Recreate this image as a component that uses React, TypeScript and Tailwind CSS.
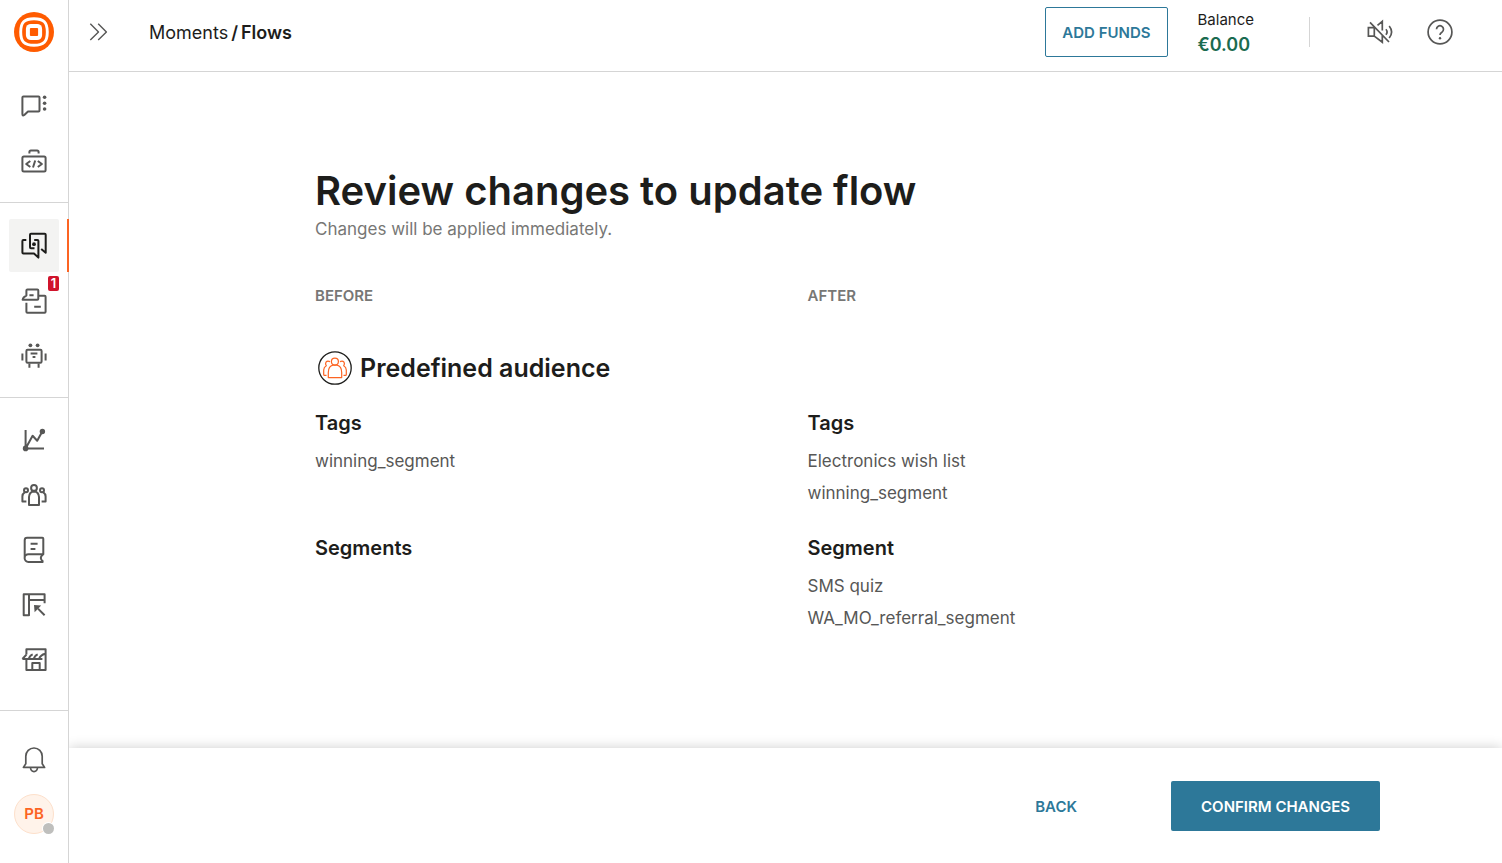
import type { ReactNode } from 'react';
import { clsx } from 'clsx';

interface NavItem {
  label: string;
  icon: ReactNode;
  active?: boolean;
  badge?: number;
}

interface ChangeGroup {
  title: string;
  items: string[];
}

const channelItems: NavItem[] = [
  {
    label: 'Channels and numbers',
    icon: (
      <>
        <path d="M3.5 5.5h15a1 1 0 0 1 1 1v13a1 1 0 0 1-1 1H8L4.3 24q-1.9 1.2-1.9-1V6.5a1 1 0 0 1 1-1z" />
        <g fill="currentColor" stroke="none">
          <circle cx="24.6" cy="6.2" r="1.8" />
          <circle cx="24.6" cy="12.2" r="1.8" />
          <circle cx="24.6" cy="18" r="1.8" />
        </g>
      </>
    ),
  },
  {
    label: 'Developer tools',
    icon: (
      <>
        <rect x="2.4" y="10.6" width="23.2" height="14.8" rx="1.5" />
        <path d="M9.4 7.6V6a1.5 1.5 0 0 1 1.5-1.5h6.2A1.5 1.5 0 0 1 18.6 6v1.6M10.3 15l-4.1 3 4.1 3M15.2 14.5l-2.2 7M17.8 15l4.1 3-4.1 3" />
      </>
    ),
  },
];

const productItems: NavItem[] = [
  {
    label: 'Moments',
    active: true,
    icon: (
      <>
        <path d="M6.3 9H3.4a1 1 0 0 0-1 1v11.6a1 1 0 0 0 1 1H14l4.4 4V10a1 1 0 0 0-1-1h-3.2" />
        <path d="M14.5 17.3H11a1 1 0 0 1-1-1V3.8a1 1 0 0 1 1-1h13.700a1 1 0 0 1 1 1V21.700L21.200 17.900" />
        <circle cx="14" cy="13.200" r="1.900" fill="currentColor" stroke="none" />
      </>
    ),
  },
  {
    label: 'Conversations',
    badge: 1,
    icon: (
      <>
        <path d="M6.400 9.600V4.400a1 1 0 0 1 1-1h9.900a1 1 0 0 1 1 1v8.400a1 1 0 0 1-1 1H2.600q.4-2.800 3.800-4.200z" />
        <path d="M18.600 9.700h6a1 1 0 0 1 1 1v15a1 1 0 0 1-1 1H7.400a1 1 0 0 1-1-1v-8.900M9.400 9.200h4.200M14.200 20.700h6.600" />
      </>
    ),
  },
  {
    label: 'Answers',
    icon: (
      <>
        <rect x="6.400" y="8.700" width="15.200" height="13" rx="1.200" />
        <path d="M2.400 12.400v7.200M25.600 12.400v7.200M9.400 26.800v-4.400M18.600 26.800v-4.400M10.600 12.600h6.800M12.600 16h2.800" />
        <g fill="currentColor" stroke="none">
          <circle cx="10.400" cy="4.300" r="1.900" />
          <circle cx="17.600" cy="4.300" r="1.900" />
        </g>
      </>
    ),
  },
];

const toolItems: NavItem[] = [
  {
    label: 'Analyze',
    icon: (
      <>
        <path d="M5.600 4v18.400H24M5.600 22.400l7-12.600 4.600 4.900 5.100-9.200" />
        <g fill="currentColor" stroke="none">
          <circle cx="5.600" cy="22.400" r="2.800" />
          <circle cx="22.400" cy="5.500" r="2.700" />
        </g>
      </>
    ),
  },
  {
    label: 'People',
    icon: (
      <>
        <circle cx="14" cy="6.900" r="2.900" />
        <path d="M9 24v-8q.3-5.400 5-5.600 4.700.2 5 5.600v8z" />
        <circle cx="6" cy="9.300" r="2" />
        <circle cx="22" cy="9.300" r="2" />
        <path d="M6.400 20.400h-4v-5q.1-2.600 2.300-4M21.600 20.400h4v-5q-.1-2.600-2.300-4" />
      </>
    ),
  },
  {
    label: 'Content',
    icon: (
      <>
        <path d="M4.700 22V4.200a2.400 2.400 0 0 1 2.400-2.400h15.200a1 1 0 0 1 1 1v15.500H8.400a3.800 3.800 0 0 0 0 7.600h15M23.300 18.300q-5 3.800 0 7.600" />
        <path d="M10.600 7.700h7M10.600 13h4.800" />
      </>
    ),
  },
  {
    label: 'Forms',
    icon: (
      <>
        <path d="M3.700 3.300H9v21H3.700zM9 3.300h15.600v9M9 9.100h15.600M18 17.600l6.600 6.700" />
        <path d="M14 14.100l7.200.5-6.600 6.600z" fill="currentColor" stroke="none" />
      </>
    ),
  },
  {
    label: 'Exchange',
    icon: (
      <>
        <path d="M6.400 8.600V3.300h19.200V24H6.400V13.200M2.400 13h20M2.400 13l4-4.400M8.700 13q1-3.600 4-4.600M13.700 13q1-3.600 4-4.600M19 13q1.400-4 6.200-5.200" />
        <path d="M12.300 24v-7h7.400v7" />
      </>
    ),
  },
];

const before: ChangeGroup[] = [
  { title: 'Tags', items: ['winning_segment'] },
  { title: 'Segments', items: [] },
];

const after: ChangeGroup[] = [
  { title: 'Tags', items: ['Electronics wish list', 'winning_segment'] },
  { title: 'Segment', items: ['SMS quiz', 'WA_MO_referral_segment'] },
];

function LineIcon({ children, tall }: { children: ReactNode; tall?: boolean }) {
  return (
    <svg
      width="28"
      height={tall ? 29 : 28}
      viewBox={tall ? '0 0 28 29' : '0 0 28 28'}
      fill="none"
      stroke="currentColor"
      strokeWidth={tall ? 2 : 1.7}
      strokeLinejoin="round"
      aria-hidden="true"
    >
      {children}
    </svg>
  );
}

function Logo() {
  return (
    <svg width="40" height="40" viewBox="0 0 40 40" aria-hidden="true">
      <circle cx="20" cy="20" r="20" fill="#ff5b00" />
      <path
        d="M20 6.700c9.800 0 13.300 3.500 13.300 13.300s-3.500 13.300-13.300 13.300S6.700 29.800 6.700 20 10.200 6.700 20 6.700z"
        fill="none"
        stroke="#fff"
        strokeWidth="2.900"
      />
      <rect x="11.900" y="11.900" width="16.200" height="16.200" rx="5" fill="#fff" />
      <rect x="15.900" y="15.900" width="8.200" height="8.200" rx="1" fill="#ff5b00" />
    </svg>
  );
}

function NavSection({ items, className }: { items: NavItem[]; className?: string }) {
  return (
    <ul className={clsx('flex flex-col gap-[2px] border-b border-[#d5d5d5]', className)}>
      {items.map(item => (
        <li
          key={item.label}
          className={clsx('relative flex justify-center', item.active && 'text-[#1d1d1b]')}
        >
          <a
            href="#"
            aria-label={item.label}
            className={clsx(
              'flex h-[53px] w-[50px] items-center justify-center rounded-xs',
              item.active && 'bg-[#f3f3f2]',
            )}
          >
            <LineIcon tall>{item.icon}</LineIcon>
          </a>
          {item.active && <span className="absolute top-0 -right-px h-full w-[2px] bg-[#fc6423]" />}
          {item.badge && (
            <span className="absolute top-[2px] right-[9px] flex h-[15px] w-[11px] items-center justify-center rounded-xs bg-[#d0142c] text-[13px] font-semibold text-white">
              {item.badge}
            </span>
          )}
        </li>
      ))}
    </ul>
  );
}

function Sidebar() {
  return (
    <nav className="flex w-[69px] shrink-0 flex-col border-r border-[#d5d5d5] text-[#575756]">
      <a href="#" aria-label="Home" className="flex h-16 items-center justify-center">
        <Logo />
      </a>
      <NavSection items={channelItems} className="py-[15px]" />
      <NavSection items={productItems} className="pt-4 pb-[15px]" />
      <NavSection items={toolItems} className="pt-4 pb-[23px]" />
      <div className="flex flex-col items-center gap-5 pt-[35px]">
        <button type="button" aria-label="Notifications">
          <LineIcon>
            <path d="M3.400 21.400h21.200l-2.400-3.700V10.200a8.200 8.200 0 0 0-16.400 0v7.500zM10.500 21.600a3.500 4 0 0 0 7 0" />
          </LineIcon>
        </button>
        <button
          type="button"
          className="relative flex size-10 items-center justify-center rounded-full border border-[#fde0cb] bg-[#fff3ea] text-[15px] font-semibold text-[#fc6423]"
        >
          PB
          <span className="absolute -right-px -bottom-px size-[11px] rounded-full bg-[#bfbfbd] ring-1 ring-white" />
        </button>
      </div>
    </nav>
  );
}

function Header() {
  return (
    <header className="flex h-[72px] items-center border-b border-[#d5d5d5] pr-12 pb-[7px] pl-[15px]">
      <button type="button" aria-label="Expand menu" className="mr-[37px] text-[#575756]">
        <LineIcon>
          <g strokeWidth="1.400">
            <path d="M6.300 5.700l8.200 8.200-8.200 8.200M14.200 5.700l8.200 8.200-8.200 8.200" />
          </g>
        </LineIcon>
      </button>
      <div className="flex gap-[3px] pt-[2px] text-lg">
        <a href="#">Moments</a>
        <span className="font-semibold">/</span>
        <span className="font-semibold">Flows</span>
      </div>
      <button
        type="button"
        className="ml-auto h-[50px] rounded-xs border border-[#2d7899] px-4 pt-[2px] text-[15px] font-semibold text-[#2d7899]"
      >
        ADD FUNDS
      </button>
      <div className="ml-[30px] pt-[2px]">
        <div className="text-[15px] leading-6">Balance</div>
        <div className="text-lg leading-[26px] font-semibold text-[#1b6b50]">€0.00</div>
      </div>
      <div className="mr-14 ml-[55px] h-[30px] w-px bg-[#d5d5d5]" />
      <div className="flex gap-8 text-[#575756]">
        <button type="button" aria-label="Unmute">
          <LineIcon>
            <path
              d="M8.300 9.700H2.400v8.400h5.900zM8.300 18.100l8 6.100v-7.600M11.500 7.300l4.800-3.900v9.200M4 4.300L23 24M19.900 11.300q2.400 2.700 0 5.400M23.200 8q4.800 6 0 12"
              strokeLinejoin="miter"
            />
          </LineIcon>
        </button>
        <button type="button" aria-label="Help">
          <LineIcon>
            <circle cx="14" cy="14" r="11.900" />
            <path d="M10.500 11.200a3.500 3.500 0 1 1 5.400 3q-1.900 1.100-1.900 2.900" />
            <circle cx="14" cy="20.300" r="1.200" fill="currentColor" stroke="none" />
          </LineIcon>
        </button>
      </div>
    </header>
  );
}

function AudienceIcon() {
  return (
    <svg width="40" height="40" viewBox="0 0 40 40" fill="none" aria-hidden="true">
      <circle cx="20" cy="20" r="16.200" stroke="#1d1d1b" strokeWidth="1.300" />
      <g stroke="#fc6423" strokeWidth="1.200" strokeLinejoin="round">
        <circle cx="19.900" cy="13.600" r="3.500" />
        <path d="M13.300 29.600v-5.200q.2-6.200 4.600-7.200h4.200q4.400 1 4.600 7.200v5.200z" />
        <path d="M15 13.600q-2.600-1.300-4 .5-1 1.700.3 3.600-2.500 1.400-2.600 4.200v4.500q0 1 1 1h1.800M25 13.600q2.600-1.300 4 .5 1 1.700-.3 3.600 2.500 1.400 2.600 4.200v4.500q0 1-1 1h-1.800" />
      </g>
    </svg>
  );
}

function Changes({ groups }: { groups: ChangeGroup[] }) {
  return (
    <div className="flex flex-col gap-[25px]">
      {groups.map(group => (
        <section key={group.title} className="min-h-[100px]">
          <h3 className="mb-2 text-xl leading-7 font-semibold">{group.title}</h3>
          <ul className="text-[17px] leading-8 text-[#575756]">
            {group.items.map(item => (
              <li key={item}>{item}</li>
            ))}
          </ul>
        </section>
      ))}
    </div>
  );
}

export default function App() {
  return (
    <div className="flex min-h-screen bg-white font-['Inter',sans-serif] text-[#1d1d1b]">
      <Sidebar />
      <div className="flex min-w-0 flex-1 flex-col">
        <Header />
        <main className="mx-auto w-full max-w-[941px] flex-1 pt-[95px] pb-10">
          <h1 className="text-[40px] leading-[48px] font-semibold">Review changes to update flow</h1>
          <p className="text-[17px] leading-7 text-[#777775]">Changes will be applied immediately.</p>

          <div className="mt-[43px] grid grid-cols-2 gap-x-11 text-[15px] leading-5 font-semibold text-[#777775]">
            <span>BEFORE</span>
            <span>AFTER</span>
          </div>

          <h2 className="mt-[42px] mb-[21px] flex items-center gap-[5px] text-[25px] leading-10 font-semibold">
            <AudienceIcon />
            Predefined audience
          </h2>

          <div className="grid grid-cols-2 gap-x-11">
            <Changes groups={before} />
            <Changes groups={after} />
          </div>
        </main>
        <footer className="flex h-[115px] items-center justify-end gap-[66px] bg-white pr-[122px] text-[15px] leading-6 font-semibold shadow-[0_0_12px_rgba(0,0,0,0.2)] [clip-path:inset(-16px_0_0_0)]">
          <button type="button" className="h-[50px] px-7 pt-[2px] text-[#2d7899]">
            BACK
          </button>
          <button type="button" className="h-[50px] rounded-xs bg-[#2d7899] px-[30px] pt-[2px] text-white">
            CONFIRM CHANGES
          </button>
        </footer>
      </div>
    </div>
  );
}
